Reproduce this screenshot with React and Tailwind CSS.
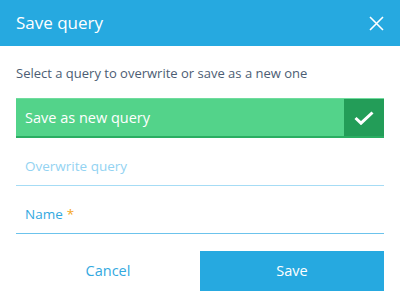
import React from "react";

const font = { fontFamily: '"Open Sans", "Noto Sans", sans-serif' };

const CloseIcon = () => (
  <svg width="15" height="15" viewBox="0 0 15 15" fill="none">
    <path d="M1 1L14 14M14 1L1 14" stroke="white" strokeWidth="1.6" />
  </svg>
);

const CheckIcon = () => (
  <svg width="20" height="14" viewBox="0 0 20 14" fill="none">
    <path d="M1.5 7L7 12.2L18.5 1.5" stroke="white" strokeWidth="3" />
  </svg>
);

export default function App() {
  return (
    <div className="w-[400px] h-[306px] bg-white" style={font}>
      <div className="h-[46px] bg-[#26a9e0] flex items-center justify-between pl-4 pr-[16px]">
        <h1 className="text-[17px] text-white">Save query</h1>
        <button className="w-4 h-4 flex items-center justify-center">
          <CloseIcon />
        </button>
      </div>

      <div className="px-4">
        <p className="pt-[17px] text-[13px] leading-[20px] text-[#4c5d73]">
          Select a query to overwrite or save as a new one
        </p>

        <div className="mt-[15px] h-10 flex border-b-2 border-[#2aae62] border-t border-t-[#6fdc9d]">
          <div className="flex-1 bg-[#53d38a] flex items-center pl-[9px] text-[14.5px] text-white">
            Save as new query
          </div>
          <div className="w-10 bg-[#239d58] flex items-center justify-center">
            <CheckIcon />
          </div>
        </div>

        <div className="h-[48px] flex items-end pl-[9px] pb-[9px] border-b border-[#a6dcf5] text-[13.5px] text-[#93d3f2]">
          Overwrite query
        </div>

        <div className="h-[48px] flex items-end pl-[9px] pb-[9px] border-b border-[#6cc3ec] text-[13.5px] text-[#33a9df]">
          Name <span className="ml-1 text-[#f5a623]">*</span>
        </div>

        <div className="mt-[17px] flex h-10">
          <button className="flex-1 text-[14.5px] text-[#33a9df]">Cancel</button>
          <button className="flex-1 bg-[#26a9e0] text-[14.5px] text-white">Save</button>
        </div>
      </div>
    </div>
  );
}
